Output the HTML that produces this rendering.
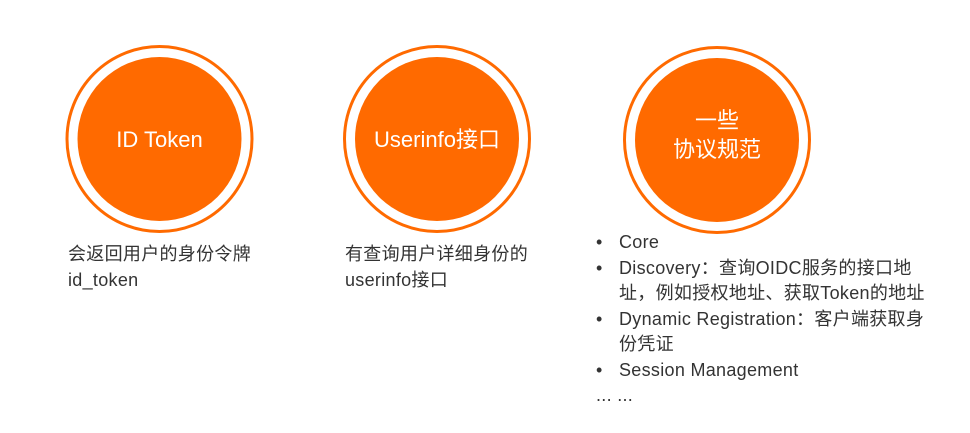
<!DOCTYPE html>
<html><head><meta charset="utf-8"><style>
body{margin:0;width:970px;height:433px;background:#fff;position:relative;overflow:hidden;font-family:"Liberation Sans","Noto Sans CJK SC",sans-serif;color:#333}
.t{position:absolute;font-size:18px;line-height:25.5px;white-space:nowrap;letter-spacing:0.3px}
.b{position:relative;padding-left:23px}
.b:before{content:"•";position:absolute;left:0}
svg{position:absolute;left:0;top:0}
</style></head><body>
<svg width="970" height="433">
<g fill="none" stroke="#ff6a00" stroke-width="3">
<circle cx="159.5" cy="139" r="92.5"/><circle cx="437" cy="139" r="92.5"/><circle cx="717" cy="140" r="92.5"/></g>
<g fill="#ff6a00"><circle cx="159.5" cy="139" r="82"/><circle cx="437" cy="139" r="82"/><circle cx="717" cy="140" r="82"/></g>
<g fill="#fff" font-family="Liberation Sans, Noto Sans CJK SC, sans-serif" font-size="22" text-anchor="middle">
<text x="159.5" y="147">ID Token</text>
<text x="437" y="147">Userinfo接口</text>
<text x="717" y="128">一些</text>
<text x="717" y="157">协议规范</text></g>
</svg>
<div class="t" style="left:68px;top:242px">会返回用户的身份令牌<br>id_token</div>
<div class="t" style="left:345px;top:242px">有查询用户详细身份的<br>userinfo接口</div>
<div class="t" style="left:596px;top:230px">
<div class="b">Core</div>
<div class="b">Discovery：查询OIDC服务的接口地</div>
<div style="padding-left:23px">址，例如授权地址、获取Token的地址</div>
<div class="b">Dynamic Registration：客户端获取身</div>
<div style="padding-left:23px">份凭证</div>
<div class="b">Session Management</div>
<div>... ...</div>
</div>
</body></html>
